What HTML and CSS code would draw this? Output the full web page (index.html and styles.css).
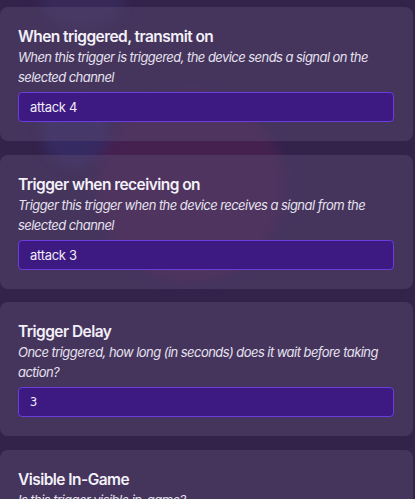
FILE: index.html
```html
<!DOCTYPE html>
<html lang="en">
<head>
<meta charset="utf-8">
<link rel="stylesheet" href="styles.css">
</head>
<body>
<div class="backdrop">
  <div class="blob blob-blue"></div>
  <div class="blob blob-blue-top"></div>
  <div class="blob blob-pink"></div>
</div>
<main class="list">
  <section class="card">
    <h2 class="title">When triggered, transmit on</h2>
    <p class="desc">When this trigger is triggered, the device sends a signal on the selected channel</p>
    <div class="field">attack 4</div>
  </section>
  <section class="card">
    <h2 class="title">Trigger when receiving on</h2>
    <p class="desc">Trigger this trigger when the device receives a signal from the selected channel</p>
    <div class="field">attack 3</div>
  </section>
  <section class="card">
    <h2 class="title">Trigger Delay</h2>
    <p class="desc">Once triggered, how long (in seconds) does it wait before taking action?</p>
    <div class="field field-num">3</div>
  </section>
  <section class="card">
    <h2 class="title">Visible In-Game</h2>
    <p class="desc">Is this trigger visible in-game?</p>
  </section>
</main>
</body>
</html>
```
FILE: styles.css
```css
html, body {
  margin: 0;
  padding: 0;
}
body {
  background: #33234b;
  font-family: Inter, "Noto Sans", sans-serif;
  color: #f2eef8;
  overflow: hidden;
  height: 499px;
  position: relative;
}
.backdrop {
  position: absolute;
  inset: 0;
  z-index: 0;
  overflow: hidden;
}
.blob {
  position: absolute;
  border-radius: 50%;
  filter: blur(6px);
}
.blob-blue {
  left: 42px;
  top: 100px;
  width: 68px;
  height: 66px;
  background: rgba(70, 70, 180, 0.22);
}
.blob-blue-top {
  left: 40px;
  top: -30px;
  width: 85px;
  height: 60px;
  background: rgba(80, 80, 170, 0.15);
}
.blob-pink {
  left: 95px;
  top: 92px;
  width: 190px;
  height: 190px;
  background: rgba(150, 30, 100, 0.18);
}
.list {
  position: relative;
  z-index: 1;
  display: flex;
  flex-direction: column;
  gap: 13.5px;
  padding-top: 7px;
  width: 413px;
}
.card {
  background: rgba(90, 75, 115, 0.45);
  border-radius: 8px;
  padding: 20px 19px 19px 18px;
  display: flex;
  flex-direction: column;
}
.title {
  margin: 0;
  font-size: 15.5px;
  font-weight: 600;
  line-height: 20px;
  letter-spacing: -0.55px;
  color: #f3f0f8;
}
.desc {
  margin: 0;
  font-size: 13px;
  font-style: italic;
  line-height: 20px;
  letter-spacing: -0.55px;
  color: #e6e1ee;
}
.field {
  margin-top: 5px;
  height: 30px;
  box-sizing: border-box;
  background: #3d1a81;
  border: 1px solid #6a3ddd;
  border-radius: 4px;
  padding: 0 11px;
  display: flex;
  align-items: center;
  font-size: 13px;
  letter-spacing: -0.3px;
  color: #f1ecfa;
}
.field-num {
  font-family: "DejaVu Sans Mono", monospace;
  font-size: 12px;
  letter-spacing: 0;
}
```
